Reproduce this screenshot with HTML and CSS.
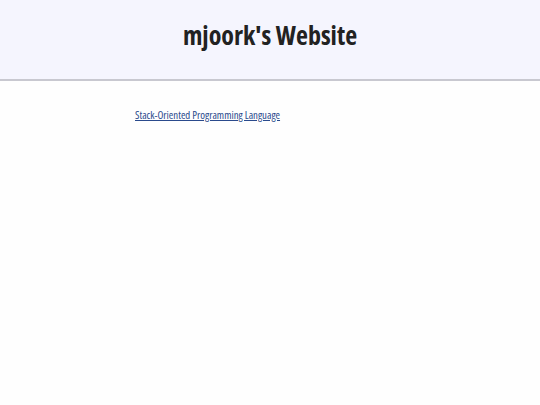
FILE: index.html
```html
<!DOCTYPE html>
<html>
<head>
<meta charset="utf-8">
<link rel="stylesheet" href="styles.css">
</head>
<body>
<header class="site-header">
  <h1 class="site-title">mjoork's Website</h1>
</header>
<main class="content">
  <a class="post-link" href="#">Stack-Oriented Programming Language</a>
</main>
</body>
</html>
```
FILE: styles.css
```css
html, body {
  margin: 0;
  padding: 0;
  background: #fefefe;
  font-family: "Open Sans", "Noto Sans", sans-serif;
  font-stretch: 75%;
}
.site-header {
  background: #f5f5fe;
  height: 69px;
  padding-bottom: 10px;
  border-bottom: 2px solid #c8c8d0;
  display: flex;
  align-items: center;
  justify-content: center;
}
.site-title {
  margin: 0;
  font-size: 26px;
  font-weight: 700;
  color: #222;
}
.content {
  width: 50%;
  margin: 0 auto;
  padding-top: 21px;
}
.post-link {
  font-size: 10.8px;
  color: #2a4a8c;
}
```
